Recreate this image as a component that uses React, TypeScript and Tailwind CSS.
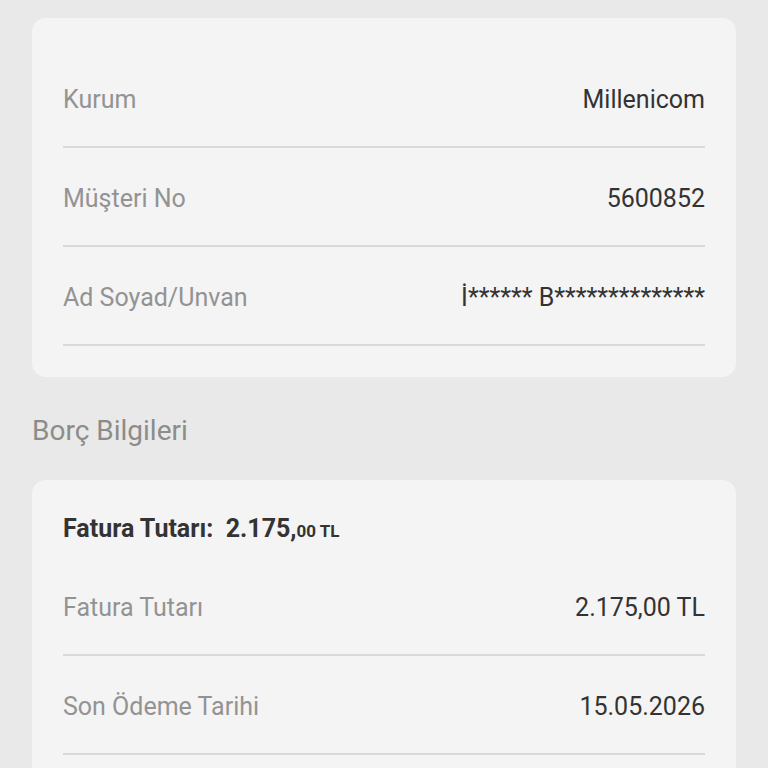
const rows1 = [
  { label: 'Kurum', value: 'Millenicom' },
  { label: 'Müşteri No', value: '5600852' },
  { label: 'Ad Soyad/Unvan', value: 'İ****** B**************' },
]

const rows2 = [
  { label: 'Fatura Tutarı', value: '2.175,00 TL' },
  { label: 'Son Ödeme Tarihi', value: '15.05.2026' },
]

function Row({ label, value }: { label: string; value: string }) {
  return (
    <div className="flex h-[99px] items-center justify-between border-b-2 border-[#d9d9d9] pt-[4px]">
      <span className="text-[25px] leading-[32px] text-[#939393]">{label}</span>
      <span className="text-[25px] leading-[32px] text-[#333333]">{value}</span>
    </div>
  )
}

export default function App() {
  return (
    <div
      className="min-h-[768px] bg-[#e9e9e9] px-[32px] pt-[18px] pb-10"
      style={{ fontFamily: 'Roboto, "Noto Sans", sans-serif' }}
    >
      <section className="rounded-[14px] bg-[#f4f4f4] px-[31px] pt-[31px] pb-[31px]">
        {rows1.map((r) => (
          <Row key={r.label} {...r} />
        ))}
      </section>

      <h2 className="mt-[36px] mb-[31px] text-[28px] leading-[36px] text-[#8c8c8c]">Borç Bilgileri</h2>

      <section className="rounded-[14px] bg-[#f4f4f4] px-[31px] pt-[31px] pb-[30px]">
        <div className="flex h-[46px] items-start">
          <p className="text-[25px] font-bold leading-[36px] text-[#333333]">
            Fatura Tutarı:&nbsp; 2.175,<span className="text-[17px]">00 TL</span>
          </p>
        </div>
        {rows2.map((r) => (
          <Row key={r.label} {...r} />
        ))}
        <div className="h-[99px]" />
      </section>
    </div>
  )
}
